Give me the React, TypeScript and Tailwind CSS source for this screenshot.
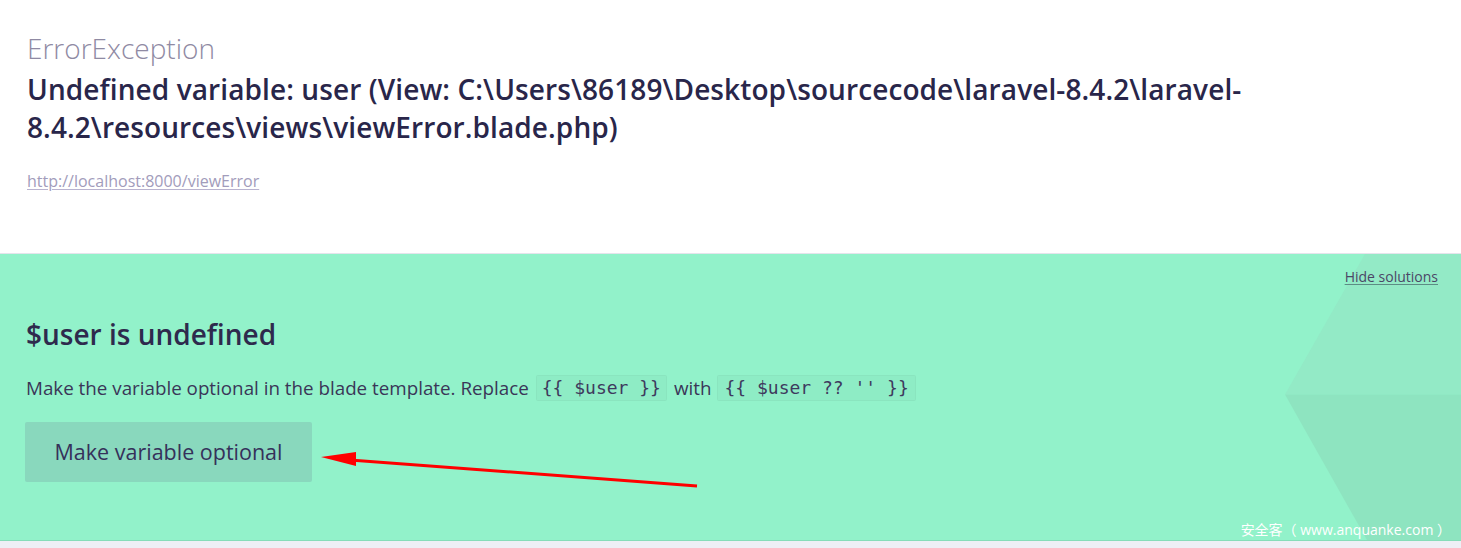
import React from "react";

export default function App() {
  return (
    <div
      className="w-full h-[548px] bg-[#eeeff5] flex flex-col overflow-hidden"
      style={{ fontFamily: "'Open Sans', 'Noto Sans', 'Noto Sans CJK SC', sans-serif" }}
    >
      <div className="bg-white h-[254px] shrink-0 border-b border-[#e4e4ec] px-[27px] pt-[30px] pr-[160px]">
        <div className="text-[28px] leading-[36px] font-light text-[#8f8aa3]">ErrorException</div>
        <h1 className="mt-[4px] text-[28px] leading-[38px] font-semibold tracking-[0.1px] text-[#29264a] break-words">
          Undefined variable: user (View: C:\Users\86189\Desktop\sourcecode\laravel-8.4.2\laravel-8.4.2\resources\views\viewError.blade.php)
        </h1>
        <a className="block mt-[24px] text-[16px] leading-[22px] text-[#a29cbb] underline decoration-[#b9b3cf] underline-offset-2">
          http://localhost:8000/viewError
        </a>
      </div>

      <div className="relative bg-[#92f2ca] h-[287px] shrink-0 border-b border-[#86dcb8]">
        <svg className="absolute inset-0 w-full h-full" viewBox="0 0 1461 287" preserveAspectRatio="none">
          <polygon points="1365,0 1461,0 1461,141 1285,141" fill="#93eac6" />
          <polygon points="1285,141 1461,141 1461,287 1367,287" fill="#8ee4c0" />
        </svg>

        <div className="relative flex flex-col px-[26px]">
          <div className="flex justify-end pt-[13px]">
            <a className="text-[14px] leading-[20px] text-[#4b4766] underline decoration-[#5d8c84] underline-offset-2 -mr-[3px]">
              Hide solutions
            </a>
          </div>
          <h2 className="mt-[29px] text-[28px] leading-[36px] font-semibold text-[#2e2a4d]">$user is undefined</h2>
          <p className="mt-[22px] text-[18.8px] leading-[28px] text-[#3a3658] flex items-center">
            <span>Make the variable optional in the blade template. Replace</span>
            <code
              className="ml-[7px] mr-[7px] px-[5px] h-[26px] flex items-center text-[18px] bg-black/[0.025] border border-black/[0.03] rounded-[2px] text-[#3e3a5e]"
              style={{ fontFamily: "'DejaVu Sans Mono', 'Liberation Mono', monospace" }}
            >
              {"{{ $user }}"}
            </code>
            <span>with</span>
            <code
              className="ml-[6px] px-[6px] h-[26px] flex items-center text-[18px] bg-black/[0.025] border border-black/[0.03] rounded-[2px] text-[#3e3a5e]"
              style={{ fontFamily: "'DejaVu Sans Mono', 'Liberation Mono', monospace" }}
            >
              {"{{ $user ?? '' }}"}
            </code>
          </p>
          <div className="mt-[20px] -ml-[1px]">
            <button className="w-[287px] h-[60px] bg-[#89d8bd] rounded-[2px] text-[21.5px] text-[#35315a]">
              Make variable optional
            </button>
          </div>
        </div>

        <div className="absolute right-[10px] bottom-[0px] text-[14px] leading-[20px] text-white">
          安全客（ www.anquanke.com ）
        </div>
      </div>

      <div className="flex-1 bg-[#eeeff5]" />

      <svg className="absolute left-0 top-0 pointer-events-none" width="1461" height="548" viewBox="0 0 1461 548">
        <line x1="697" y1="486" x2="350" y2="460" stroke="#ff0000" strokeWidth="3" />
        <polygon points="321,457 356,452 356,466" fill="#ff0000" />
      </svg>
    </div>
  );
}
